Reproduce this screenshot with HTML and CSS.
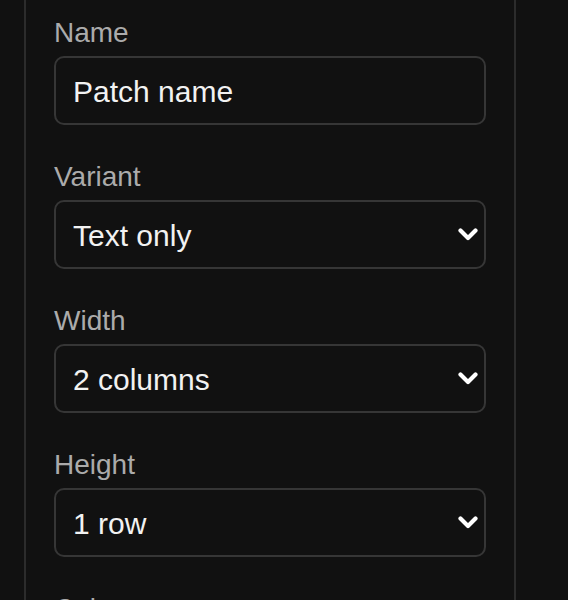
FILE: index.html
```html
<!DOCTYPE html>
<html lang="en">
<head>
<meta charset="utf-8">
<title>Patch settings</title>
<link rel="stylesheet" href="styles.css">
</head>
<body>
<div class="panel">
  <div class="field">
    <label class="label" for="name">Name</label>
    <input class="control" id="name" type="text" value="Patch name">
  </div>
  <div class="field">
    <label class="label" for="variant">Variant</label>
    <div class="select-wrap">
      <select class="control" id="variant"><option>Text only</option><option>Image</option></select>
      <svg class="chev" viewBox="0 0 20 13" width="20" height="13"><polyline points="2.5,2.5 10,10 17.5,2.5"/></svg>
    </div>
  </div>
  <div class="field">
    <label class="label" for="width">Width</label>
    <div class="select-wrap">
      <select class="control" id="width"><option>2 columns</option><option>1 column</option></select>
      <svg class="chev" viewBox="0 0 20 13" width="20" height="13"><polyline points="2.5,2.5 10,10 17.5,2.5"/></svg>
    </div>
  </div>
  <div class="field">
    <label class="label" for="height">Height</label>
    <div class="select-wrap">
      <select class="control" id="height"><option>1 row</option><option>2 rows</option></select>
      <svg class="chev" viewBox="0 0 20 13" width="20" height="13"><polyline points="2.5,2.5 10,10 17.5,2.5"/></svg>
    </div>
  </div>
  <div class="field">
    <label class="label">Color</label>
  </div>
</div>
</body>
</html>
```

FILE: styles.css
```css
html, body {
  margin: 0;
  padding: 0;
  background: #111111;
}
body {
  font-family: "Liberation Sans", Arial, sans-serif;
}
.panel {
  margin-left: 24px;
  width: 492px;
  box-sizing: border-box;
  border-left: 2px solid #2c2c2c;
  border-right: 2px solid #2c2c2c;
  padding: 12px 28px 40px;
  display: flex;
  flex-direction: column;
  gap: 31px;
}
.field {
  display: flex;
  flex-direction: column;
  gap: 2px;
}
.label {
  font-size: 28px;
  line-height: 42px;
  color: #ababab;
}
.control {
  appearance: none;
  -webkit-appearance: none;
  box-sizing: border-box;
  width: 100%;
  height: 69px;
  margin: 0;
  padding: 2px 40px 0 17px;
  background: #111111;
  border: 2px solid #363636;
  border-radius: 10px;
  color: #f2f2f2;
  font-family: "Liberation Sans", Arial, sans-serif;
  font-size: 30px;
  line-height: 36px;
  outline: none;
}
.select-wrap {
  position: relative;
}
.chev {
  position: absolute;
  right: 8px;
  top: 28px;
  pointer-events: none;
}
.chev polyline {
  fill: none;
  stroke: #ffffff;
  stroke-width: 4.2;
  stroke-linecap: round;
  stroke-linejoin: round;
}
```
